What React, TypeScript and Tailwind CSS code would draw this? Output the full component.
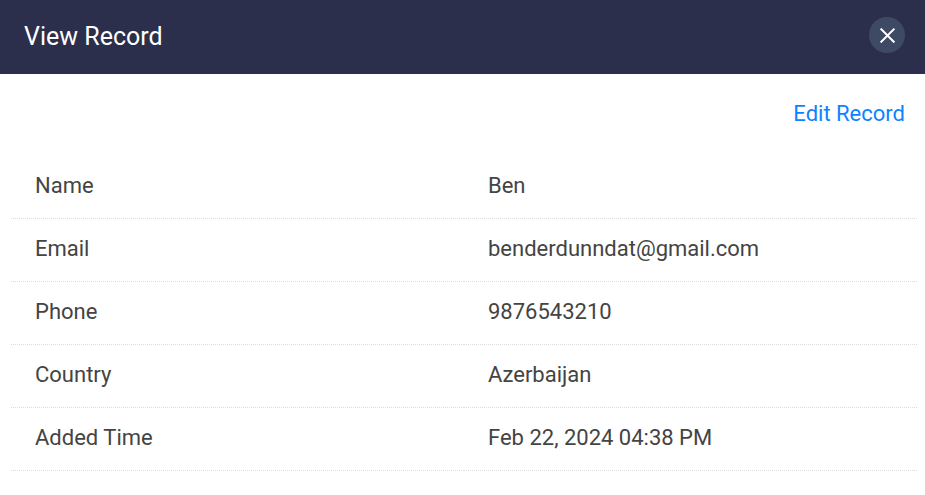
import React from "react";

const RECORD = [
  { label: "Name", value: "Ben" },
  { label: "Email", value: "benderdunndat@gmail.com" },
  { label: "Phone", value: "9876543210" },
  { label: "Country", value: "Azerbaijan" },
  { label: "Added Time", value: "Feb 22, 2024 04:38 PM" },
];

export default function ViewRecord() {
  return (
    <div className="min-h-screen bg-white font-[Roboto,'Liberation_Sans',sans-serif] text-[22px] leading-8 text-[#444444]">
      {/* Header */}
      <header className="flex items-start justify-between bg-[#2c2f4c] py-[17px] pr-5 pl-6">
        <h1 className="text-[25px] leading-10 text-white">View Record</h1>
        <button
          type="button"
          aria-label="Close"
          className="flex size-9 items-center justify-center rounded-full bg-[#3e4a63] text-white"
        >
          <svg
            viewBox="0 0 16 16"
            className="size-4"
            fill="none"
            stroke="currentColor"
            strokeWidth="2"
            strokeLinecap="square"
          >
            <path d="M2.3 2.3 14.7 14.7M14.7 2.3 2.3 14.7" />
          </svg>
        </button>
      </header>

      <div className="flex justify-end px-5 pt-6 pb-[26px]">
        <a href="#edit" className="text-[#0c83ff]">
          Edit Record
        </a>
      </div>

      {/* Record fields */}
      <div className="pr-2 pl-[11px]">
        <table className="w-full table-fixed border-separate border-spacing-0">
          <tbody>
            {RECORD.map((field) => (
              <tr key={field.label}>
                <th
                  scope="row"
                  className="w-1/2 border-b border-dotted border-[#dddddd] px-6 pt-[14px] pb-4 text-left font-normal"
                >
                  {field.label}
                </th>
                <td className="border-b border-dotted border-[#dddddd] px-6 pt-[14px] pb-4">
                  {field.value}
                </td>
              </tr>
            ))}
          </tbody>
        </table>
      </div>
    </div>
  );
}
